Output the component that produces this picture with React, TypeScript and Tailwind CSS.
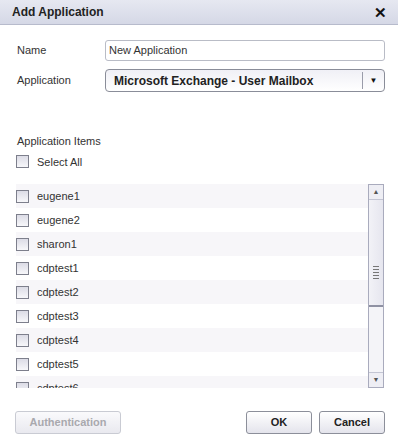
import { useState } from 'react';

const items = ['eugene1', 'eugene2', 'sharon1', 'cdptest1', 'cdptest2', 'cdptest3', 'cdptest4', 'cdptest5', 'cdptest6'];

function Check({ checked, onChange }: { checked: boolean; onChange: () => void }) {
  return (
    <span
      onClick={onChange}
      className="w-[13px] h-[13px] border border-[#7d7f8c] bg-gradient-to-b from-[#dcdce6] to-[#f7f7fa] flex items-center justify-center shrink-0 cursor-pointer"
    >
      {checked && <span className="text-[10px] leading-none text-[#333]">✓</span>}
    </span>
  );
}

export default function App() {
  const [name, setName] = useState('New Application');
  const [checked, setChecked] = useState<Record<string, boolean>>({});
  const [all, setAll] = useState(false);

  function toggle(item: string) {
    setChecked({ ...checked, [item]: !checked[item] });
  }

  return (
    <div className="w-[398px] h-[445px] bg-white flex flex-col text-[11px] text-[#333] font-['Liberation_Sans',Arial,sans-serif]">
      <div className="h-[25px] shrink-0 flex items-center justify-between pl-[12px] pr-[11px] bg-gradient-to-b from-[#e6e8f1] to-[#d5d8e6] border-b border-[#b7bbcc]">
        <span className="text-[12px] font-bold text-[#222]">Add Application</span>
        <span className="text-[15px] font-bold text-[#111] leading-none">✕</span>
      </div>

      <div className="flex items-center mt-[14px] h-[22px]">
        <span className="w-[105px] pl-[17px]">Name</span>
        <input
          value={name}
          onChange={(e) => setName(e.target.value)}
          className="w-[280px] h-[21px] border border-[#b9bcc6] rounded-[3px] px-[3px] text-[11px] text-[#333] outline-none"
        />
      </div>

      <div className="flex items-center mt-[8px] h-[23px]">
        <span className="w-[105px] pl-[17px]">Application</span>
        <div className="w-[280px] h-[23px] border border-[#8a8d99] rounded-[4px] flex items-center bg-gradient-to-b from-[#f0f0f6] to-[#ffffff]">
          <span className="flex-1 pl-[8px] text-[12px] font-bold text-[#222]">Microsoft Exchange - User Mailbox</span>
          <span className="w-px h-[17px] bg-[#9a9caa]" />
          <span className="w-[21px] flex justify-center text-[8px] text-[#111]">▼</span>
        </div>
      </div>

      <div className="mt-[41px] pl-[17px]">Application Items</div>
      <div className="flex items-center gap-[8px] pl-[16px] mt-[4px]">
        <Check checked={all} onChange={() => setAll(!all)} />
        <span>Select All</span>
      </div>

      <div className="flex mt-[14px] h-[204px] pl-[16px] pr-[14px]">
        <div className="flex-1 overflow-hidden">
          {items.map((item, i) => (
            <div
              key={item}
              className={`h-[24px] flex items-center gap-[8px] ${i % 2 === 0 ? 'bg-[#f7f6f9]' : 'bg-white'}`}
            >
              <Check checked={all || !!checked[item]} onChange={() => toggle(item)} />
              <span>{item}</span>
            </div>
          ))}
        </div>
        <div className="w-[16px] flex flex-col border border-[#a9abbd] bg-[#f4f4f8]">
          <div className="h-[15px] flex items-center justify-center border-b border-[#c3c5d3] bg-[#eeeef4] text-[7px] text-[#555]">▲</div>
          <div className="h-[107px] flex items-center justify-center border-b-2 border-[#8f91a3] bg-gradient-to-r from-[#f2f2f7] to-[#e6e6ef]">
            <div className="flex flex-col gap-[2px] mt-[40px]">
              <span className="w-[6px] h-px bg-[#777]" />
              <span className="w-[6px] h-px bg-[#777]" />
              <span className="w-[6px] h-px bg-[#777]" />
              <span className="w-[6px] h-px bg-[#777]" />
              <span className="w-[6px] h-px bg-[#777]" />
            </div>
          </div>
          <div className="flex-1" />
          <div className="h-[15px] flex items-center justify-center border-t border-[#c3c5d3] bg-[#eeeef4] text-[7px] text-[#555]">▼</div>
        </div>
      </div>

      <div className="flex items-center mt-[23px] pl-[15px] pr-[13px]">
        <button className="w-[106px] h-[23px] border border-[#c9cbd3] rounded-[3px] bg-gradient-to-b from-[#fafafc] to-[#e9e9ef] text-[11px] font-bold text-[#a9a9ae]">
          Authentication
        </button>
        <div className="flex-1" />
        <button className="w-[66px] h-[23px] border border-[#8c8f9a] rounded-[3px] bg-gradient-to-b from-[#ffffff] to-[#e4e4ec] text-[11px] font-bold text-[#222]">
          OK
        </button>
        <button className="w-[66px] h-[23px] ml-[7px] border border-[#8c8f9a] rounded-[3px] bg-gradient-to-b from-[#ffffff] to-[#e4e4ec] text-[11px] font-bold text-[#222]">
          Cancel
        </button>
      </div>
    </div>
  );
}
